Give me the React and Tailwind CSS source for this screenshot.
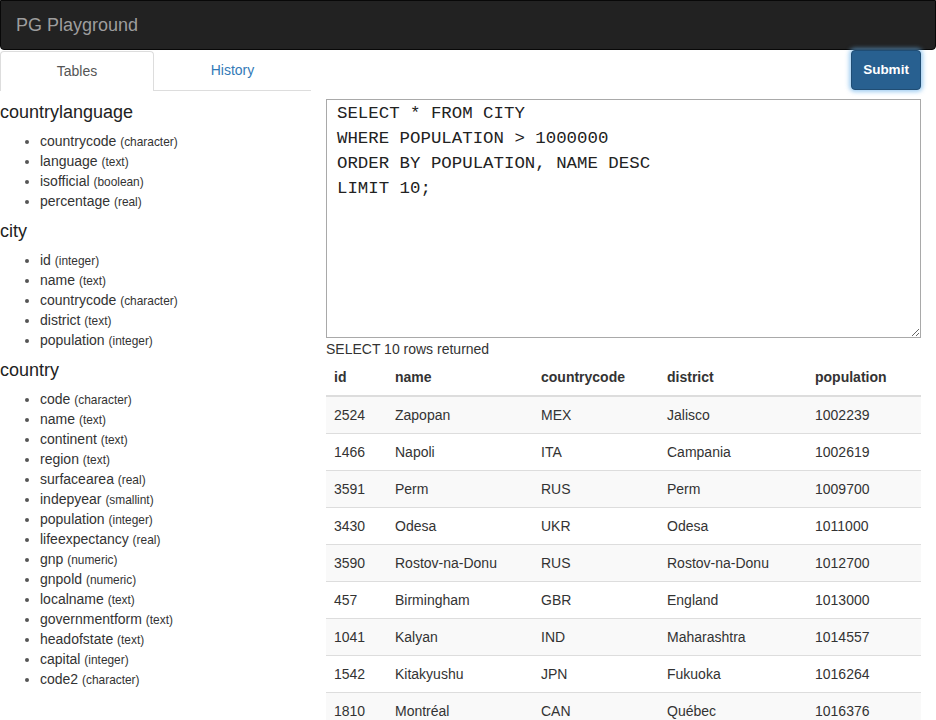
import React from "react";

const tables = [
  {
    name: "countrylanguage",
    columns: [
      ["countrycode", "character"],
      ["language", "text"],
      ["isofficial", "boolean"],
      ["percentage", "real"],
    ],
  },
  {
    name: "city",
    columns: [
      ["id", "integer"],
      ["name", "text"],
      ["countrycode", "character"],
      ["district", "text"],
      ["population", "integer"],
    ],
  },
  {
    name: "country",
    columns: [
      ["code", "character"],
      ["name", "text"],
      ["continent", "text"],
      ["region", "text"],
      ["surfacearea", "real"],
      ["indepyear", "smallint"],
      ["population", "integer"],
      ["lifeexpectancy", "real"],
      ["gnp", "numeric"],
      ["gnpold", "numeric"],
      ["localname", "text"],
      ["governmentform", "text"],
      ["headofstate", "text"],
      ["capital", "integer"],
      ["code2", "character"],
    ],
  },
];

const rows = [
  ["2524", "Zapopan", "MEX", "Jalisco", "1002239"],
  ["1466", "Napoli", "ITA", "Campania", "1002619"],
  ["3591", "Perm", "RUS", "Perm", "1009700"],
  ["3430", "Odesa", "UKR", "Odesa", "1011000"],
  ["3590", "Rostov-na-Donu", "RUS", "Rostov-na-Donu", "1012700"],
  ["457", "Birmingham", "GBR", "England", "1013000"],
  ["1041", "Kalyan", "IND", "Maharashtra", "1014557"],
  ["1542", "Kitakyushu", "JPN", "Fukuoka", "1016264"],
  ["1810", "Montréal", "CAN", "Québec", "1016376"],
];

const query = `SELECT * FROM CITY
WHERE POPULATION > 1000000
ORDER BY POPULATION, NAME DESC
LIMIT 10;`;

export default function App() {
  return (
    <div className="h-[720px] overflow-hidden bg-white text-[#333] text-[14px] font-['Liberation_Sans',Arial,sans-serif]">
      <nav className="h-[50px] bg-[#222] border border-[#080808] rounded-b-[4px] flex items-center px-[15px]">
        <span className="text-[18px] text-[#9d9d9d]">PG Playground</span>
      </nav>

      <div className="flex">
        {/* sidebar */}
        <div className="w-[311px] shrink-0">
          <div className="flex h-[41px] pt-[1px]">
            <div className="w-[154px] flex items-center justify-center border border-b-0 border-[#ddd] rounded-t-[4px] text-[#555]">
              Tables
            </div>
            <div className="flex-1 flex items-center justify-center border-b border-[#ddd] text-[#337ab7]">
              History
            </div>
          </div>

          {tables.map((t, ti) => (
            <div key={t.name}>
              <h4 className={(ti === 0 ? "mt-[11px]" : "mt-[10px]") + " text-[18px] leading-[20px] mb-[9px] text-[#222]"}>
                {t.name}
              </h4>
              <ul className="list-disc pl-[40px] marker:text-[#555]">
                {t.columns.map(([c, type]) => (
                  <li key={c} className="h-[20px] leading-[20px]">
                    {c} <small className="text-[11.9px] leading-none">({type})</small>
                  </li>
                ))}
              </ul>
            </div>
          ))}
        </div>

        {/* main */}
        <div className="w-[595px] ml-[15px]">
          <div className="flex justify-end">
            <button className="w-[70px] h-[40px] rounded-[4px] bg-[#286090] border border-[#204d74] text-white font-bold text-[13.5px] shadow-[0_0_4px_2px_rgba(102,175,233,0.6)]">
              Submit
            </button>
          </div>
          <textarea
            defaultValue={query}
            className="mt-[9px] block w-full h-[239px] border border-[#a9a9a9] px-[10px] pt-[1px] text-[17.4px] leading-[25px] text-[#222] font-['Liberation_Mono','Courier_New',monospace] resize-y outline-none"
          />
          <div className="mt-[1px] leading-[20px]">SELECT 10 rows returned</div>
          <table className="w-full border-collapse">
            <thead>
              <tr>
                <th className="w-[61px] text-left font-bold px-[8px] py-[8px] leading-[20px] border-b-2 border-[#ddd]">id</th>
                <th className="w-[146px] text-left font-bold px-[8px] py-[8px] leading-[20px] border-b-2 border-[#ddd]">name</th>
                <th className="w-[126px] text-left font-bold px-[8px] py-[8px] leading-[20px] border-b-2 border-[#ddd]">countrycode</th>
                <th className="w-[148px] text-left font-bold px-[8px] py-[8px] leading-[20px] border-b-2 border-[#ddd]">district</th>
                <th className="text-left font-bold px-[8px] py-[8px] leading-[20px] border-b-2 border-[#ddd]">population</th>
              </tr>
            </thead>
            <tbody>
              {rows.map((r, i) => (
                <tr key={r[0]} className={i % 2 === 0 ? "bg-[#f9f9f9]" : "bg-white"}>
                  {r.map((v, j) => (
                    <td key={j} className="px-[8px] py-[8px] leading-[20px] border-t border-[#ddd]">
                      {v}
                    </td>
                  ))}
                </tr>
              ))}
            </tbody>
          </table>
        </div>
      </div>
    </div>
  );
}
